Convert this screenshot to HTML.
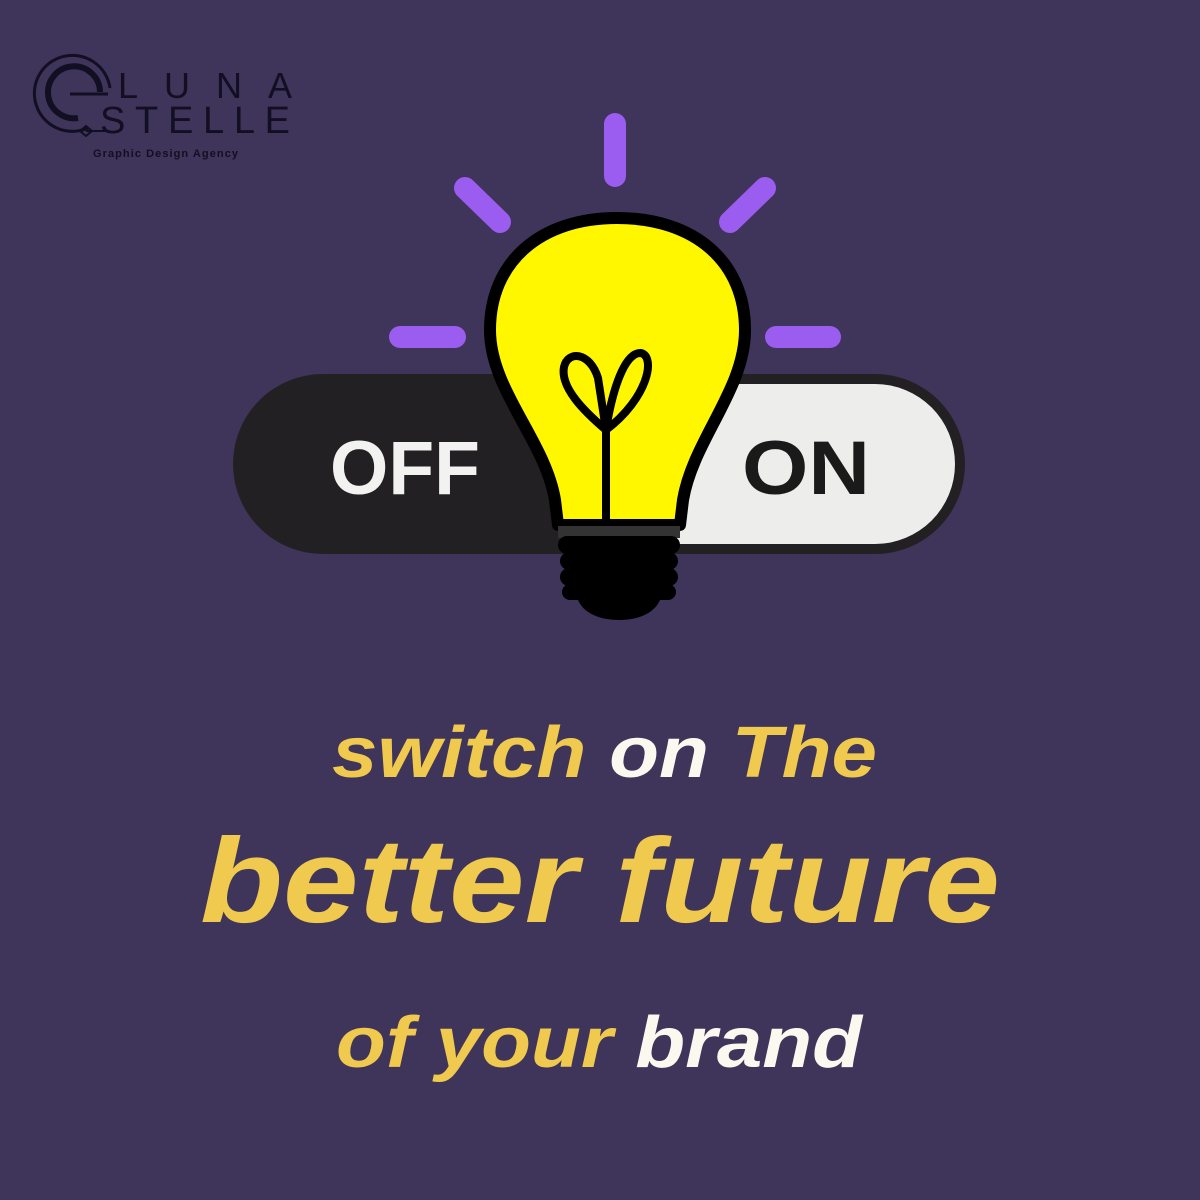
<!DOCTYPE html>
<html><head><meta charset="utf-8"><style>
html,body{margin:0;padding:0;background:#3f3459;}
svg{display:block}
</style></head><body>
<svg width="1200" height="1200" viewBox="0 0 1200 1200" xmlns="http://www.w3.org/2000/svg">
<rect width="1200" height="1200" fill="#3f3459"/>
<!-- logo -->
<g fill="none" stroke="#120f22">
<path d="M88 128 A38 38 0 1 1 110 88" stroke-width="3"/>
<path d="M78 118 A26 26 0 1 1 100 92" stroke-width="6"/>
<path d="M70 94 H108" stroke-width="3"/>
<path d="M86 131 H108" stroke-width="2"/>
</g>
<path d="M80 131 l6 -5 6 5 -6 5z" fill="none" stroke="#120f22" stroke-width="2"/>
<text x="118" y="98" font-family="Liberation Sans, sans-serif" font-size="36" fill="#120f22" textLength="174" lengthAdjust="spacing">LUNA</text>
<text x="100" y="133" font-family="Liberation Sans, sans-serif" font-size="38" fill="#120f22" textLength="190" lengthAdjust="spacing">STELLE</text>
<text x="93" y="157" font-family="Liberation Sans, sans-serif" font-size="11" font-weight="bold" fill="#120f22" textLength="145">Graphic Design Agency</text>
<!-- rays -->
<g stroke="#9b5cf0" stroke-width="22" stroke-linecap="round">
<line x1="615" y1="124" x2="615" y2="176"/>
<line x1="465" y1="188" x2="500" y2="222"/>
<line x1="765" y1="188" x2="730" y2="222"/>
<line x1="400" y1="337" x2="455" y2="337"/>
<line x1="776" y1="337" x2="830" y2="337"/>
</g>
<!-- switch -->
<rect x="233" y="374" width="732" height="180" rx="90" fill="#222022"/>
<path d="M690 384 H875 A80 80 0 0 1 875 544 H560 Z" fill="#ededeb"/>
<text x="330" y="494" font-family="Liberation Sans, sans-serif" font-weight="bold" font-size="76" fill="#f2f2f0" textLength="150" lengthAdjust="spacingAndGlyphs">OFF</text>
<text x="742" y="494" font-family="Liberation Sans, sans-serif" font-weight="bold" font-size="76" fill="#1a1a1a" textLength="128" lengthAdjust="spacingAndGlyphs">ON</text>
<!-- bulb -->
<path d="M617 218 C540 218 490 262 490 330 C490 390 545 440 555 500 L558 525 L680 525 L683 500 C693 440 745 390 745 330 C745 262 695 218 617 218 Z" fill="#fff700" stroke="#000" stroke-width="12" stroke-linejoin="round"/>
<g fill="none" stroke="#000" stroke-width="8" stroke-linecap="round" stroke-linejoin="round">
<path d="M606 520 V430"/>
<path d="M606 430 C585 412 560 388 564 367 C568 350 590 352 598 378 Z"/>
<path d="M606 430 C612 392 624 352 641 353 C656 357 648 398 606 430 Z"/>
</g>
<rect x="558" y="526" width="122" height="12" fill="#333"/>
<g fill="#000">
<rect x="558" y="536" width="122" height="18" rx="9"/>
<rect x="560" y="552" width="118" height="18" rx="9"/>
<rect x="560" y="568" width="118" height="18" rx="9"/>
<rect x="562" y="584" width="114" height="16" rx="8"/>
<path d="M578 600 H660 C655 612 640 620 619 620 C598 620 583 612 578 600 Z"/>
</g>
<!-- headline -->
<g font-family="Liberation Sans, sans-serif" font-style="italic" font-weight="bold">
<text x="332" y="777" font-size="72" textLength="545" lengthAdjust="spacingAndGlyphs"><tspan fill="#f0c94f">switch </tspan><tspan fill="#fbf8f0">on </tspan><tspan fill="#f0c94f">The</tspan></text>
<text x="200" y="922" font-size="120" fill="#f0c94f" textLength="800" lengthAdjust="spacingAndGlyphs">better future</text>
<text x="336" y="1067" font-size="72" textLength="526" lengthAdjust="spacingAndGlyphs"><tspan fill="#f0c94f">of your </tspan><tspan fill="#fbf8f0">brand</tspan></text>
</g>
</svg>
</body></html>
